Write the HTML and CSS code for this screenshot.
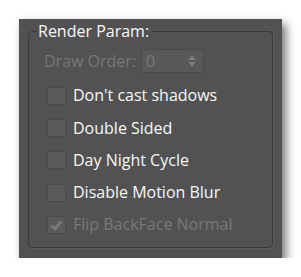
FILE: index.html
```html
<!DOCTYPE html>
<html lang="en">
<head>
  <meta charset="UTF-8" />
  <title>Render Param</title>
  <link rel="stylesheet" href="styles.css">
</head>
<body>
  <div class="panel">
    <fieldset class="group">
      <legend>Render Param:</legend>

      <div class="row order">
        <span class="label off">Draw Order:</span>
        <div class="spin">
          <span class="value">0</span>
          <svg class="arrows" width="8" height="14" viewBox="0 0 8 14">
            <path d="M4 1 L7.5 6 L0.5 6 Z" fill="#7d7d7d" />
            <path d="M4 13 L7.5 8 L0.5 8 Z" fill="#7d7d7d" />
          </svg>
        </div>
      </div>

      <label class="row check"><span class="box"></span><span class="label">Don't cast shadows</span></label>
      <label class="row check"><span class="box"></span><span class="label">Double Sided</span></label>
      <label class="row check"><span class="box"></span><span class="label">Day Night Cycle</span></label>
      <label class="row check"><span class="box"></span><span class="label">Disable Motion Blur</span></label>
      <label class="row check">
        <span class="box">
          <svg width="17" height="16" viewBox="0 0 17 16">
            <path d="M3.5 8.5 L7 12 L13.5 4" stroke="#777" stroke-width="3" fill="none" />
          </svg>
        </span>
        <span class="label off">Flip BackFace Normal</span>
      </label>
    </fieldset>
  </div>
</body>
</html>
```

FILE: styles.css
```css
* {
  margin: 0;
  padding: 0;
  box-sizing: border-box;
}

body {
  background: #ffffff;
  font-family: 'Open Sans', sans-serif;
  font-size: 16px;
}

.panel {
  width: 263px;
  height: 239px;
  margin: 19px 0 0 19px;
  padding: 2px 9px 0 9px;
  background: #525252;
  box-shadow: 4px 5px 9px rgba(0, 0, 0, 0.55);
}

.group {
  height: 227px;
  border: 1px solid #3a3a3a;
  border-radius: 4px;
  box-shadow: 1px 1px 0 #5c5c5c;
  padding: 0 8px 0 18px;
}

.group legend {
  color: #f8f8f8;
  margin-left: -10px;
  padding: 0 3px 0 1px;
  line-height: 20px;
}

.row {
  display: flex;
  align-items: center;
}

.label {
  color: #f8f8f8;
}

.label.off {
  color: #787878;
}

.order {
  height: 24px;
  margin: 8px 0 0 -3px;
}

.spin {
  width: 63px;
  height: 24px;
  margin-left: 5px;
  background: #585858;
  border: 1px solid #4a4a4a;
  display: flex;
  align-items: center;
  justify-content: space-between;
  padding: 0 7px 0 4px;
}

.spin .value {
  color: #787878;
}

.check {
  height: 19px;
  line-height: 19px;
  margin-top: 13.3px;
  gap: 7px;
}

.box {
  width: 19px;
  height: 18px;
  background: #5a5a5a;
  border: 1px solid #4b4b4b;
  display: flex;
  align-items: center;
  justify-content: center;
}
```
